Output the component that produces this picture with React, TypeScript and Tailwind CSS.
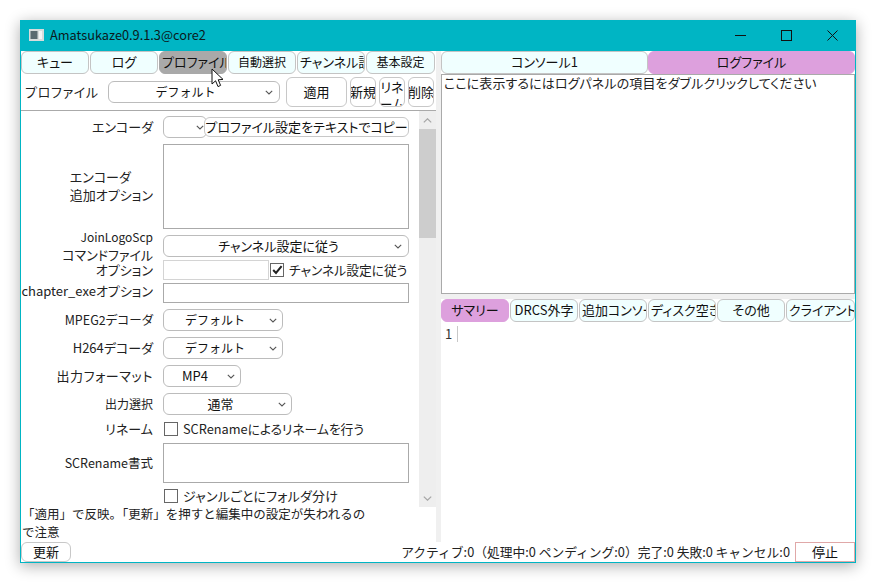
import { ReactNode } from 'react';

const Chevron = () => (
  <svg width="8" height="5" viewBox="0 0 8 5" className="shrink-0" fill="none" stroke="#555" strokeWidth="1.1">
    <path d="M0.8 0.8 L4 4 L7.2 0.8" />
  </svg>
);

const Tab = ({ label, active, pink, clip, small, w }: { label: string; active?: boolean; pink?: boolean; clip?: boolean; small?: boolean; w: string }) => (
  <div
    className={`${w} h-[23px] shrink-0 flex items-center overflow-hidden whitespace-nowrap rounded-[6px] border pb-[1px] leading-[18px] text-[#111] ${
      small ? 'text-[12px]' : 'text-[13px]'
    } ${clip ? 'justify-start pl-[2px]' : 'justify-center'} ${
      pink ? 'bg-[#dda0dd] border-[#dda0dd]' : active ? 'bg-[#a9a9a9] border-[#a9a9a9]' : 'bg-[#f0ffff] border-[#c4c4c4]'
    }`}
  >
    {label}
  </div>
);

const Select = ({ label, w, pad, wide }: { label: string; w: string; pad: string; wide?: boolean }) => (
  <div className={`${w} h-[22px] shrink-0 flex items-center rounded-[6px] border border-[#bcbcbc] bg-white ${pad}`}>
    <span
      className={`flex-1 text-center leading-[18px] text-[#111] whitespace-nowrap ${
        wide ? 'text-[12px] pr-[5px] [font-feature-settings:normal]' : 'text-[13px] pr-[3px]'
      }`}
    >
      {label}
    </span>
    <Chevron />
  </div>
);

const Check = ({ checked }: { checked?: boolean }) => (
  <div className="w-[14px] h-[14px] shrink-0 border border-[#666] bg-white flex items-center justify-center">
    {checked && (
      <svg width="11" height="10" viewBox="0 0 11 10" fill="none" stroke="#222" strokeWidth="2">
        <path d="M1.2 5 L4 8 L9.6 1.2" />
      </svg>
    )}
  </div>
);

const Row = ({ label, h, mt, children }: { label: ReactNode; h: string; mt: string; children?: ReactNode }) => (
  <div className={`flex items-center ${h} ${mt}`}>
    <div className="w-[132px] shrink-0 text-right text-[13px] leading-[18px] text-[#222] whitespace-nowrap pb-[1px]">{label}</div>
    <div className="ml-[10px] flex-1 flex items-center min-w-0">{children}</div>
  </div>
);

const SmallBtn = ({ children, w, h }: { children: ReactNode; w: string; h: string }) => (
  <div className={`${w} ${h} shrink-0 flex items-center justify-center overflow-hidden whitespace-nowrap rounded-[6px] border border-[#c8c8c8] bg-white text-[13px] leading-[18px] text-[#111] text-center`}>
    {children}
  </div>
);

export default function App() {
  return (
    <div
      className="w-[876px] h-[583px] bg-white pt-[20px] pl-[20px] overflow-hidden [font-feature-settings:'palt']"
      style={{ fontFamily: '"Noto Sans CJK JP", "Noto Sans", sans-serif' }}
    >
      <div className="relative w-[836px] h-[543px] flex flex-col border border-[#00b5c4] bg-white shadow-[0_3px_14px_rgba(0,0,0,0.32)]">
        {/* title bar */}
        <div className="h-[30px] shrink-0 bg-[#00b5c4] flex items-center">
          <svg width="15" height="12" viewBox="0 0 15 12" className="ml-[8px] mb-[2px]">
            <rect x="0" y="0" width="15" height="12" fill="#d8dcdc" />
            <rect x="1.5" y="2" width="7" height="8" fill="#5a6a70" />
            <rect x="10" y="2" width="3" height="8" fill="#f4f4f4" />
          </svg>
          <span className="ml-[6px] pb-[2px] text-[12.75px] leading-[18px] text-[#0b1a1c]">Amatsukaze0.9.1.3@core2</span>
          <div className="ml-auto flex items-center h-full pb-[2px]">
            <div className="w-[46px] flex justify-center">
              <svg width="11" height="11" viewBox="0 0 11 11" stroke="#111" fill="none"><path d="M0 5.5 H11" /></svg>
            </div>
            <div className="w-[46px] flex justify-center">
              <svg width="11" height="11" viewBox="0 0 11 11" stroke="#111" fill="none"><rect x="0.5" y="0.5" width="10" height="10" /></svg>
            </div>
            <div className="w-[46px] flex justify-center">
              <svg width="11" height="11" viewBox="0 0 11 11" stroke="#111" fill="none"><path d="M0.5 0.5 L10.5 10.5 M10.5 0.5 L0.5 10.5" /></svg>
            </div>
          </div>
        </div>

        <div className="flex-1 flex min-h-0">
          {/* left column */}
          <div className="w-[415px] shrink-0 flex flex-col">
            <div className="flex gap-px h-[23px] shrink-0">
              <Tab w="w-[68px]" label="キュー" />
              <Tab w="w-[68px]" label="ログ" />
              <Tab w="w-[68px]" active clip label="プロファイル" />
              <Tab w="w-[68px]" small label="自動選択" />
              <Tab w="w-[68px]" clip label="チャンネル設定" />
              <Tab w="w-[69px]" small label="基本設定" />
            </div>

            <div className="h-[37px] shrink-0 flex items-center border-b border-[#aaa]">
              <span className="ml-[4px] w-[83px] text-[13px] leading-[18px] tracking-[0.7px] text-[#222]">プロファイル</span>
              <Select w="w-[172px]" pad="pr-[6px] pl-[2px]" wide label="デフォルト" />
              <div className="ml-[6px]"><SmallBtn w="w-[61px]" h="h-[30px]">適用</SmallBtn></div>
              <div className="ml-[3px]"><SmallBtn w="w-[26px]" h="h-[30px]">新規</SmallBtn></div>
              <div className="ml-[3px]">
                <SmallBtn w="w-[26px]" h="h-[30px]">
                  <span className="block leading-[17px] pt-[5px]">リネ<br />ーム</span>
                </SmallBtn>
              </div>
              <div className="ml-[3px]"><SmallBtn w="w-[26px]" h="h-[30px]">削除</SmallBtn></div>
            </div>

            {/* form */}
            <div className="h-[396px] shrink-0 flex overflow-hidden">
              <div className="w-[398px] shrink-0 pr-[10px] overflow-hidden">
                <Row label="エンコーダ" h="h-[22px]" mt="mt-[5px]">
                  <Select w="w-[44px]" pad="pr-[2px]" label="" />
                  <div className="relative -ml-[3px] flex-1 h-[20px] flex items-center justify-center overflow-hidden whitespace-nowrap rounded-[6px] border border-[#c8c8c8] bg-white text-[13px] leading-[18px] text-[#111]">
                    プロファイル設定をテキストでコピー
                  </div>
                </Row>
                <Row
                  label={
                    <div className="inline-block text-left">
                      エンコーダ
                      <br />
                      追加オプション
                    </div>
                  }
                  h="h-[85px]"
                  mt="mt-[6px]"
                >
                  <div className="w-full h-[85px] border border-[#aaa] bg-white" />
                </Row>
                <Row
                  label={
                    <>
                      <span className="text-[12px]">JoinLogoScp</span>
                      <br />
                      コマンドファイル
                    </>
                  }
                  h="h-[22px]"
                  mt="mt-[6px]"
                >
                  <Select w="w-full" pad="pr-[6px] pl-[2px]" label="チャンネル設定に従う" />
                </Row>
                <Row label="オプション" h="h-[20px]" mt="mt-[3px]">
                  <div className="w-[106px] h-[20px] shrink-0 border border-[#d4d4d4] bg-white" />
                  <div className="ml-[1px]"><Check checked /></div>
                  <span className="ml-[5px] text-[12.75px] leading-[18px] text-[#222] whitespace-nowrap pb-[1px]">チャンネル設定に従う</span>
                </Row>
                <Row label={<span className="block pb-[3px]">chapter_exeオプション</span>} h="h-[20px]" mt="mt-[3px]">
                  <div className="w-full h-[20px] border border-[#aaa] bg-white" />
                </Row>
                <Row label={<span className="text-[12.5px]">MPEG2デコーダ</span>} h="h-[22px]" mt="mt-[6px]">
                  <Select w="w-[120px]" pad="pr-[5px] pl-[2px]" wide label="デフォルト" />
                </Row>
                <Row label="H264デコーダ" h="h-[22px]" mt="mt-[6px]">
                  <Select w="w-[120px]" pad="pr-[5px] pl-[2px]" wide label="デフォルト" />
                </Row>
                <Row label={<span className="tracking-[0.6px]">出力フォーマット</span>} h="h-[22px]" mt="mt-[6px]">
                  <Select w="w-[78px]" pad="pr-[5px] pl-[2px]" label="MP4" />
                </Row>
                <Row label={<span className="text-[12px]">出力選択</span>} h="h-[22px]" mt="mt-[6px]">
                  <Select w="w-[129px]" pad="pr-[5px] pl-[2px]" label="通常" />
                </Row>
                <Row label="リネーム" h="h-[14px]" mt="mt-[7px]">
                  <div className="ml-[1px]"><Check /></div>
                  <span className="ml-[5px] text-[12.75px] leading-[18px] text-[#222] whitespace-nowrap">SCRenameによるリネームを行う</span>
                </Row>
                <Row label={<span className="text-[12.5px]">SCRename書式</span>} h="h-[40px]" mt="mt-[7px]">
                  <div className="w-full h-[40px] border border-[#aaa] bg-white" />
                </Row>
                <Row label="" h="h-[14px]" mt="mt-[6px]">
                  <div className="ml-[1px]"><Check /></div>
                  <span className="ml-[5px] text-[13px] leading-[18px] tracking-[0.2px] text-[#222] whitespace-nowrap pb-[1px]">ジャンルごとにフォルダ分け</span>
                </Row>
              </div>
              {/* scrollbar */}
              <div className="w-[17px] shrink-0 bg-[#eeeeee] flex flex-col">
                <div className="h-[18px] shrink-0 flex items-center justify-center">
                  <svg width="9" height="5" viewBox="0 0 9 5" fill="none" stroke="#a6a6a6" strokeWidth="1.2"><path d="M0.8 4.4 L4.5 0.8 L8.2 4.4" /></svg>
                </div>
                <div className="h-[109px] shrink-0 bg-[#cdcdcd]" />
                <div className="mt-auto h-[18px] shrink-0 flex items-center justify-center">
                  <svg width="9" height="5" viewBox="0 0 9 5" fill="none" stroke="#a6a6a6" strokeWidth="1.2"><path d="M0.8 0.6 L4.5 4.2 L8.2 0.6" /></svg>
                </div>
              </div>
            </div>

            <div className="flex-1 text-[12.5px] leading-[18px] text-[#222] pl-[1px] overflow-hidden [font-feature-settings:normal]">
              <div className="-mt-[2px]">
                「適用」で反映。「更新」を押すと編集中の設定が失われるの
                <br />
                で注意
              </div>
            </div>
          </div>

          {/* splitter */}
          <div className="w-[5px] shrink-0 bg-[#f0f0f0]" />

          {/* right column */}
          <div className="flex-1 min-w-0 flex flex-col">
            <div className="flex h-[23px] shrink-0">
              <Tab w="w-[207px]" label="コンソール1" />
              <Tab w="w-[207px]" pink label="ログファイル" />
            </div>
            <div className="h-[220px] shrink-0 border border-[#aaa] bg-white px-[2px] text-[13px] leading-[16px] tracking-[0.1px] text-[#222]">
              ここに表示するにはログパネルの項目をダブルクリックしてください
            </div>
            <div className="h-[5px] shrink-0 bg-[#f0f0f0]" />
            <div className="flex gap-px h-[23px] shrink-0">
              <Tab w="w-[68px]" pink label="サマリー" />
              <Tab w="w-[68px]" label="DRCS外字" />
              <Tab w="w-[68px]" clip label="追加コンソール" />
              <Tab w="w-[68px]" clip label="ディスク空き" />
              <Tab w="w-[68px]" label="その他" />
              <Tab w="w-[69px]" clip label="クライアント" />
            </div>
            <div className="flex-1 pt-[4px] pl-[4px]">
              <div className="flex items-center h-[16px]">
                <span className="w-[12px] text-[13px] leading-[16px] text-[#333]">1</span>
                <div className="w-px h-[16px] bg-[#c8c8c8]" />
              </div>
            </div>
          </div>
        </div>

        {/* bottom bar */}
        <div className="h-[20px] shrink-0 flex items-center">
          <SmallBtn w="w-[50px]" h="h-[20px]">更新</SmallBtn>
          <span className="ml-auto mr-[5px] text-[12.75px] leading-[18px] text-[#222] whitespace-nowrap [font-feature-settings:normal]">
            アクティブ:0（処理中:0 ペンディング:0）完了:0 失敗:0 キャンセル:0
          </span>
          <div className="w-[60px] h-[20px] shrink-0 flex items-center justify-center border border-[#e0a8a8] bg-white text-[13px] leading-[18px] text-[#111]">
            停止
          </div>
        </div>

        {/* mouse cursor over the tab */}
        <svg width="14" height="21" viewBox="0 0 14 21" className="absolute left-[190px] top-[47px]">
          <path d="M1 1 L1 16 L4.6 12.8 L7 18.6 L9.6 17.4 L7.2 11.8 L12 11.4 Z" fill="#fff" stroke="#111" strokeWidth="1" />
        </svg>
      </div>
    </div>
  );
}
